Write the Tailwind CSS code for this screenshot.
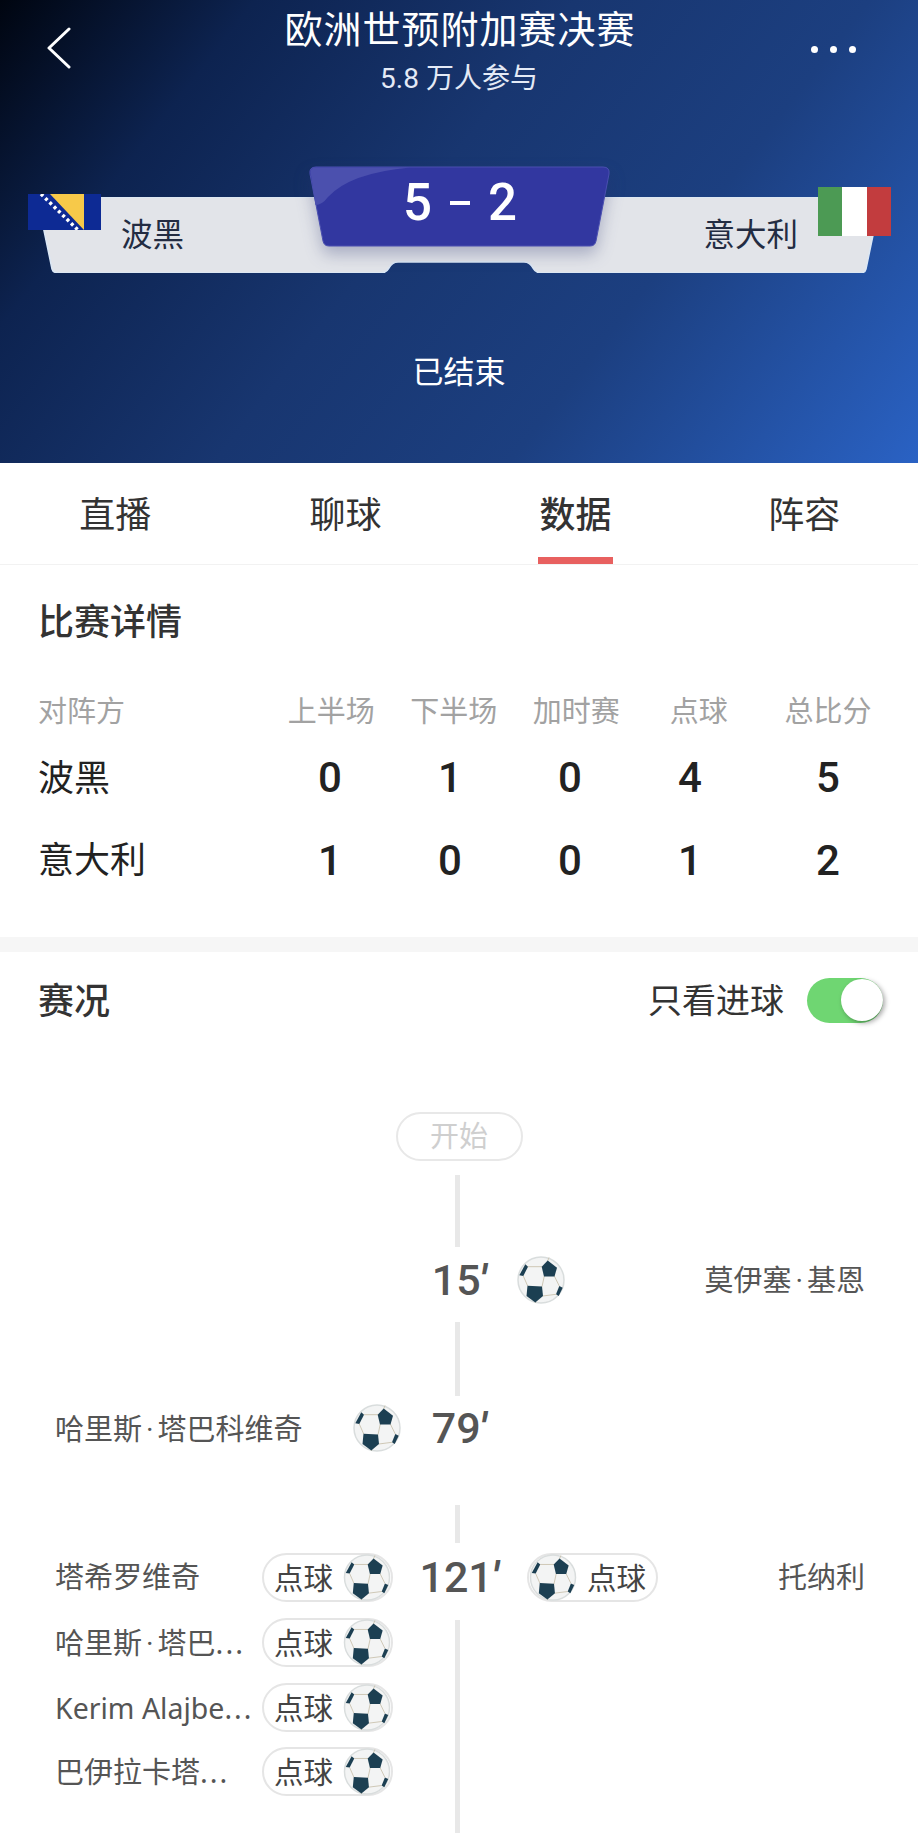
<!DOCTYPE html>
<html lang="zh">
<head>
  <meta charset="UTF-8" />
  <meta name="viewport" content="width=device-width, initial-scale=1.0" />
  <title>欧洲世预附加赛决赛</title>
  <script src="https://cdn.jsdelivr.net/npm/@tailwindcss/browser@4"></script>
</head>
<body class="bg-white font-['Roboto','Noto_Sans_CJK_SC',sans-serif] text-[#333]">

  <!-- ball icon, reused below -->
  <svg class="hidden">
    <symbol id="ball" viewBox="0 0 48 48">
      <circle cx="24" cy="24" r="23" fill="#f3f4f4" stroke="#d9dddd" stroke-width="1.5" />
      <g stroke="#c9c2ae" stroke-width="0.9" fill="none">
        <path d="M25 10.7H11M27.3 20L25 30.7M37.3 20L42.3 30M25.7 40L39 38.3M6.3 20L10.7 30M30.7 5L32 1.5M18.3 46V47" />
      </g>
      <g fill="#1c3f52">
        <path d="M30.7 4.5L40 11.7L37.5 20.5H27L24.7 10.7Z" />
        <path d="M10.5 29.7L25 30.5L26 40L18.3 46.5L9.5 40Z" />
        <path d="M2.3 19.3L8.3 8.3L11 10.7L6.3 20Z" />
        <path d="M42.3 30L45.7 31.7L41.7 40L39 38.3Z" />
      </g>
    </symbol>
  </svg>

  <!-- Header -->
  <header class="relative h-[463px] bg-[linear-gradient(128deg,#000510_0%,#0d2350_20%,#183670_45%,#1c3f80_68%,#2a62c4_100%)] text-white">
    <div class="relative flex justify-between pl-[47px] pr-[62px] pt-[27px]">
      <svg width="24" height="42" viewBox="0 0 24 42" fill="none" stroke="white" stroke-width="3" stroke-linecap="round" stroke-linejoin="round">
        <path d="M22 2L2 21L22 40" />
      </svg>
      <div class="flex gap-[12px] pt-[19px]">
        <span class="w-[7px] h-[7px] rounded-full bg-white"></span>
        <span class="w-[7px] h-[7px] rounded-full bg-white"></span>
        <span class="w-[7px] h-[7px] rounded-full bg-white"></span>
      </div>
    </div>
    <div class="absolute top-[7px] inset-x-0 text-center">
      <h1 class="text-[38px] leading-[46px] tracking-[1px] pl-[2px]">欧洲世预附加赛决赛</h1>
      <p class="text-[28px] leading-[36px] mt-[8px] text-[#e4eaf6]">5.8 万人参与</p>
    </div>

    <!-- Team bar -->
    <div class="absolute left-0 top-[167px] w-full h-[110px]">
      <svg class="absolute left-[37px] top-[30px]" width="844" height="76" viewBox="0 0 844 76">
        <path d="M0 0H844L829 72Q828 76 823 76H504Q499 76 496 71Q493 65 487 65H361Q355 65 352 71Q349 76 344 76H22Q16 76 15 72Z" fill="#e2e4e9" stroke="#dbe7f5" stroke-width="1.5" />
      </svg>
      <svg class="absolute left-[28px] top-[27px]" width="73" height="36" viewBox="0 0 73 36">
        <rect width="73" height="36" fill="#0d2a94" />
        <path d="M22 0H56V36Z" fill="#f7c949" />
        <path d="M13 0L50 36" stroke="white" stroke-width="3.5" stroke-dasharray="3 3" />
      </svg>
      <div class="absolute left-[818px] top-[20px] w-[73px] h-[49px] flex">
        <div class="flex-1 bg-[#4c9a54]"></div>
        <div class="flex-1 bg-white"></div>
        <div class="flex-1 bg-[#c23c3e]"></div>
      </div>
      <span class="absolute left-[121px] top-[49px] text-[31.5px] leading-[40px] text-[#232c42]">波黑</span>
      <span class="absolute right-[120px] top-[49px] text-[31.5px] leading-[40px] text-[#232c42]">意大利</span>

      <!-- Score plate -->
      <svg class="absolute left-[300px] top-0 overflow-visible" width="320" height="92" viewBox="0 0 320 92">
        <path d="M16 0H303Q310 0 309 7L296 74Q295 79 290 79H29Q24 79 23 74L10 7Q9 0 16 0Z" fill="#3237a0" stroke="#4a4fb0" stroke-width="1" class="drop-shadow-[0_8px_8px_rgba(40,50,110,0.3)]" />
        <path d="M10.5 5Q10.5 0.5 16 0.5H110Q50 6 28 30Q22 38 15.5 38Z" fill="#4b50ae" />
      </svg>
      <div class="absolute left-[300px] top-[13px] w-[320px] flex justify-center items-center gap-[18px] text-[51px] leading-[46px] font-medium">
        <span>5</span>
        <span class="w-[20px] h-[4px] bg-white"></span>
        <span>2</span>
      </div>
    </div>

    <p class="absolute inset-x-0 top-[353px] text-center text-[31px] leading-[40px]">已结束</p>
  </header>

  <!-- Tabs -->
  <nav class="grid grid-cols-[230.5px_230px_230px_1fr] h-[102px] border-b border-[#f2f2f2] text-[36px] text-center text-[#333]">
    <a class="pt-[28px] leading-[50px]">直播</a>
    <a class="pt-[28px] leading-[50px]">聊球</a>
    <a class="relative pt-[28px] leading-[50px] font-medium">数据
      <span class="absolute left-[77px] bottom-0 w-[75px] h-[7px] bg-[#e8605f]"></span>
    </a>
    <a class="pt-[28px] leading-[50px]">阵容</a>
  </nav>

  <!-- Match details -->
  <section class="pl-[38px] pr-[12px] pt-[34px] h-[387px] border-b-[15px] border-[#f6f6f6]">
    <h3 class="text-[36px] leading-[48px] font-medium">比赛详情</h3>
    <div class="grid grid-cols-[232px_122.5px_122.5px_122.5px_122.5px_136px] mt-[45px] text-center text-[29px] leading-[40px] text-[#a2a2a2]">
      <div class="text-left">对阵方</div><div>上半场</div><div>下半场</div><div>加时赛</div><div>点球</div><div>总比分</div>
    </div>
    <div class="grid grid-cols-[232px_120px_120px_120px_120px_156px] mt-[23px] text-center text-[42px] leading-[46px] font-medium text-[#222]">
      <div class="text-left text-[36px] font-normal pt-[1px]">波黑</div><div>0</div><div>1</div><div>0</div><div>4</div><div>5</div>
    </div>
    <div class="grid grid-cols-[232px_120px_120px_120px_120px_156px] mt-[36px] text-center text-[42px] leading-[46px] font-medium text-[#222]">
      <div class="text-left text-[36px] font-normal">意大利</div><div>1</div><div>0</div><div>0</div><div>1</div><div>2</div>
    </div>
  </section>

  <!-- Events -->
  <section class="pt-[24px]">
    <div class="flex items-center justify-between pl-[38px] pr-[35px] h-[48px]">
      <h3 class="text-[36px] font-medium pt-[3px]">赛况</h3>
      <div class="flex items-center gap-[23px]">
        <span class="text-[34px] leading-[48px] pt-[1px]">只看进球</span>
        <div class="relative w-[76px] h-[45px] rounded-full bg-[#6fd672]">
          <span class="absolute right-0 top-[1px] w-[42px] h-[42px] rounded-full bg-white shadow-[2px_2px_5px_rgba(0,0,0,0.35)]"></span>
        </div>
      </div>
    </div>

    <div class="flex flex-col items-center mt-[88px]">
      <div class="w-[127px] h-[49px] rounded-full border-2 border-[#e8e8e8] text-center text-[29px] leading-[47px] text-[#cfcfcf]">开始</div>
      <div class="w-[5px] h-[72px] mt-[14px] mr-[3px] bg-[#e8e8e8]"></div>
    </div>

    <div class="grid grid-cols-[411px_96px_1fr] items-center h-[48px] mt-[1px]">
      <div></div>
      <div class="text-center text-[43px] font-medium text-[#555]">15<span class="italic font-bold -ml-[1px]">'</span></div>
      <div class="flex items-center justify-between pl-[10px] pr-[53px]">
        <svg class="w-[48px] h-[48px]"><use href="#ball" /></svg>
        <span class="text-[29px] text-[#555] pt-[3px]">莫伊塞<span class="mx-[4px]">·</span>基恩</span>
      </div>
    </div>

    <div class="flex justify-center mt-[26px] pr-[3px]"><div class="w-[5px] h-[74px] bg-[#e8e8e8]"></div></div>

    <div class="grid grid-cols-[411px_96px_1fr] items-center h-[48px]">
      <div class="flex items-center justify-between pl-[55px] pr-[10px]">
        <span class="text-[29px] text-[#555] pt-[4px]">哈里斯<span class="mx-[4px]">·</span>塔巴科维奇</span>
        <svg class="w-[48px] h-[48px]"><use href="#ball" /></svg>
      </div>
      <div class="text-center text-[43px] font-medium text-[#555]">79<span class="italic font-bold -ml-[1px]">'</span></div>
      <div></div>
    </div>

    <div class="flex justify-center mt-[61px] pr-[3px]"><div class="w-[5px] h-[38px] bg-[#e8e8e8]"></div></div>

    <div class="grid grid-cols-[411px_96px_1fr] items-center h-[49px] mt-[2px]">
      <div class="flex items-center justify-between pl-[55px] pr-[18px]">
        <span class="text-[29px] text-[#555] pt-[3px]">塔希罗维奇</span>
        <div class="flex items-center justify-between w-[131px] h-[49px] rounded-full border-2 border-[#e5e5e5] pl-[10px]">
          <span class="text-[29.5px] text-[#444] pt-[4px]">点球</span>
          <svg class="w-[48px] h-[47px]"><use href="#ball" /></svg>
        </div>
      </div>
      <div class="text-center text-[43px] font-medium text-[#555]">121<span class="italic font-bold -ml-[1px]">'</span></div>
      <div class="flex items-center justify-between pl-[20px] pr-[53px]">
        <div class="flex items-center justify-between w-[131px] h-[49px] rounded-full border-2 border-[#e5e5e5] pr-[10px]">
          <svg class="w-[48px] h-[47px]"><use href="#ball" /></svg>
          <span class="text-[29.5px] text-[#444] pt-[4px]">点球</span>
        </div>
        <span class="text-[29px] text-[#555] pt-[3px]">托纳利</span>
      </div>
    </div>

    <div class="relative grid grid-cols-[411px_96px_1fr] mt-[24px]">
      <div class="flex flex-col gap-[15.5px] pl-[55px] pr-[18px]">
        <div class="flex items-center justify-between h-[49px]">
          <span class="text-[29px] text-[#555] pt-[2px]">哈里斯<span class="mx-[4px]">·</span>塔巴<span class="font-['Noto_Sans'] tracking-[2px]">...</span></span>
          <div class="flex items-center justify-between w-[131px] h-[49px] rounded-full border-2 border-[#e5e5e5] pl-[10px]">
            <span class="text-[29.5px] text-[#444] pt-[4px]">点球</span>
            <svg class="w-[48px] h-[47px]"><use href="#ball" /></svg>
          </div>
        </div>
        <div class="flex items-center justify-between h-[49px]">
          <span class="font-['Noto_Sans'] text-[28.5px] text-[#555] pt-[2px]">Kerim Alajbe<span class="tracking-[2px]">...</span></span>
          <div class="flex items-center justify-between w-[131px] h-[49px] rounded-full border-2 border-[#e5e5e5] pl-[10px]">
            <span class="text-[29.5px] text-[#444] pt-[4px]">点球</span>
            <svg class="w-[48px] h-[47px]"><use href="#ball" /></svg>
          </div>
        </div>
        <div class="flex items-center justify-between h-[49px]">
          <span class="text-[29px] text-[#555] pt-[2px]">巴伊拉卡塔<span class="font-['Noto_Sans'] tracking-[2px]">...</span></span>
          <div class="flex items-center justify-between w-[131px] h-[49px] rounded-full border-2 border-[#e5e5e5] pl-[10px]">
            <span class="text-[29.5px] text-[#444] pt-[4px]">点球</span>
            <svg class="w-[48px] h-[47px]"><use href="#ball" /></svg>
          </div>
        </div>
      </div>
      <div class="flex justify-center pr-[3px]"><div class="w-[5px] h-[213px] mt-[2px] bg-[#e8e8e8]"></div></div>
      <div></div>
    </div>
  </section>

</body>
</html>
